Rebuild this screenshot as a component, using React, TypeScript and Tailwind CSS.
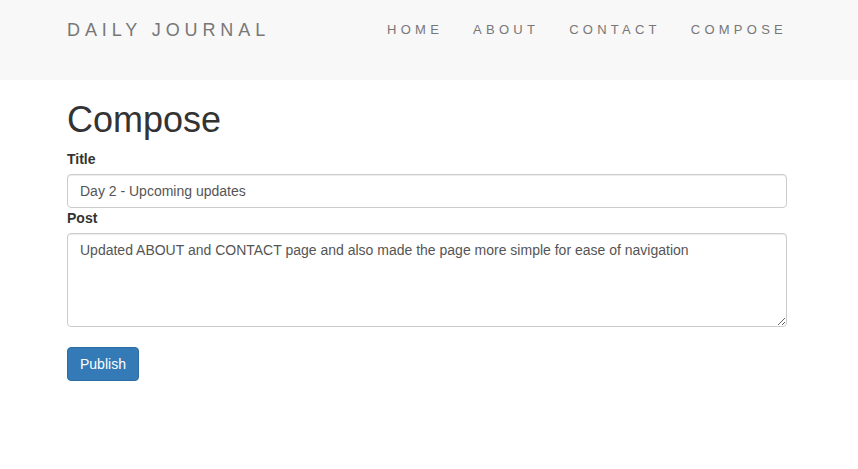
import React from "react";

const navLinks = ["HOME", "ABOUT", "CONTACT", "COMPOSE"];

export default function App() {
    return (
        <div className="min-h-[469px] bg-white font-['Liberation_Sans',Arial,sans-serif] text-[14px] text-[#333]">
            {/* Top navbar */}
            <nav className="h-[80px] bg-[#f8f8f8]">
                <div className="ml-[52px] w-[750px] px-[15px] flex items-start justify-between">
                    <a className="pt-[20px] text-[18px] leading-[20px] tracking-[4.9px] text-[#777] whitespace-nowrap">
                        DAILY JOURNAL
                    </a>
                    <ul className="flex -mr-[15px] pt-[20px]">
                        {navLinks.map((l) => (
                            <li key={l}>
                                <a className="block px-[15px] text-[13px] leading-[20px] tracking-[4.25px] text-[#777]">
                                    {l}
                                </a>
                            </li>
                        ))}
                    </ul>
                </div>
            </nav>

            {/* Compose form */}
            <div className="ml-[52px] w-[750px] px-[15px]">
                <h1 className="mt-[20px] mb-[9px] text-[36px] leading-[1.1] font-normal text-[#333]">Compose</h1>
                <form className="flex flex-col">
                    <label className="mb-[5px] font-bold leading-[20px]">Title</label>
                    <input
                        className="h-[34px] w-full px-[12px] rounded-[4px] border border-[#ccc] text-[14px] text-[#555] shadow-[inset_0_1px_1px_rgba(0,0,0,0.075)] outline-none"
                        defaultValue="Day 2 - Upcoming updates"
                    />
                    <label className="mb-[5px] font-bold leading-[20px]">Post</label>
                    <textarea
                        rows={4}
                        className="h-[94px] w-full px-[12px] py-[6px] rounded-[4px] border border-[#ccc] text-[14px] leading-[20px] text-[#555] shadow-[inset_0_1px_1px_rgba(0,0,0,0.075)] outline-none"
                        defaultValue="Updated ABOUT and CONTACT page and also made the page more simple for ease of navigation"
                    />
                    <div className="mt-[20px]">
                        <button
                            type="button"
                            className="h-[34px] px-[12px] rounded-[4px] border border-[#2e6da4] bg-[#337ab7] text-white text-[14px] leading-[20px]"
                        >
                            Publish
                        </button>
                    </div>
                </form>
            </div>
        </div>
    );
}
